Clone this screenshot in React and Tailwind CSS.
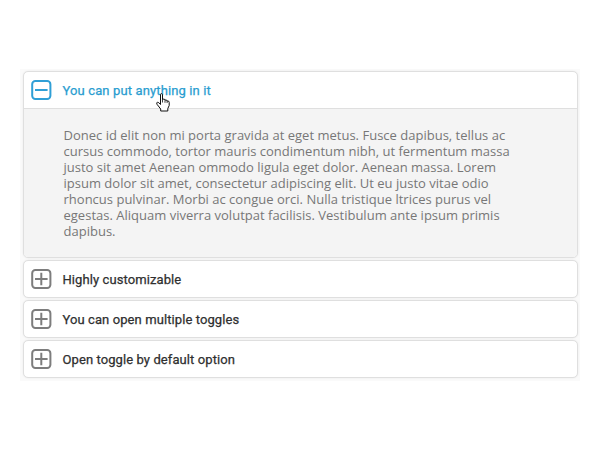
import React from "react";

const items = [
  {
    title: "You can put anything in it",
    open: true,
    lines: [
      "Donec id elit non mi porta gravida at eget metus. Fusce dapibus, tellus ac",
      "cursus commodo, tortor mauris condimentum nibh, ut fermentum massa",
      "justo sit amet Aenean ommodo ligula eget dolor. Aenean massa. Lorem",
      "ipsum dolor sit amet, consectetur adipiscing elit. Ut eu justo vitae odio",
      "rhoncus pulvinar. Morbi ac congue orci. Nulla tristique ltrices purus vel",
      "egestas. Aliquam viverra volutpat facilisis. Vestibulum ante ipsum primis",
      "dapibus.",
    ],
  },
  { title: "Highly customizable" },
  { title: "You can open multiple toggles" },
  { title: "Open toggle by default option" },
];

function ToggleIcon({ open }) {
  return (
    <svg
      width="21"
      height="20"
      viewBox="0 0 21 20"
      fill="none"
      stroke="currentColor"
      strokeWidth="2"
      className={open ? "shrink-0 text-[#2f9fd6]" : "shrink-0 text-[#7d7d7d]"}
    >
      <rect x="1.2" y="1" width="18.2" height="18" rx="3.2" />
      <path d={open ? "M4 10H16.6" : "M4 10H16.6M10.3 3.7V16.3"} />
    </svg>
  );
}

function HandCursor() {
  return (
    <svg width="14" height="19" viewBox="0 0 14 19" className="absolute left-[156px] top-[92.5px]">
      <path
        d="M4.5 11.5V1.8Q4.5 .6 5.5 .6T6.5 1.8V6.2Q8.9 5.6 9 7Q11 6.5 11.1 8Q13.2 7.6 13.2 9.4V12.5L11.8 15.5V18H4.7V16L1 11.3Q.2 9.6 1.4 9.2Q2.5 8.9 4.5 11.5Z"
        fill="#fff"
        stroke="#111"
        strokeWidth="1"
        strokeLinejoin="round"
      />
      <path d="M6.5 6V9.5M9 7V9.8M11.1 8V10" stroke="#111" strokeWidth=".8" />
    </svg>
  );
}

function Item({ title, open, lines }) {
  return (
    <section className="overflow-hidden rounded-[5px] border border-[#dfdfdf] bg-white shadow-[0_0_2px_rgba(0,0,0,0.08)]">
      <button
        className={`flex h-9 w-full items-center gap-[10.5px] pl-[7px] text-left font-[Roboto,sans-serif] text-[13px] font-normal leading-5 [-webkit-text-stroke:0.25px] ${
          open ? "tracking-[0.13px] text-[#2a9dd0]" : "tracking-[0.09px] text-[#2f2f2f]"
        }`}
      >
        <ToggleIcon open={open} />
        <span className="pt-0.5">{title}</span>
      </button>
      {open && (
        <div className="h-[149px] border-t border-[#dfdfdf] bg-[#f4f4f4] pl-[39.5px] pt-[18px] font-['Open_Sans',sans-serif] text-[13px] leading-4 tracking-[0.008px] text-[#777]">
          {lines.map((line) => (
            <p key={line} className="whitespace-nowrap">{line}</p>
          ))}
        </div>
      )}
    </section>
  );
}

export default function App() {
  return (
    <main className="relative h-[450px] w-[600px] overflow-hidden bg-white pl-5 pt-[69px]">
      <div className="flex h-[312px] w-[560px] flex-col gap-0.5 bg-[#fafafa] pl-[3px] pr-0.5 pt-0.5">
        {items.map((item) => (
          <Item key={item.title} {...item} />
        ))}
      </div>
      <HandCursor />
    </main>
  );
}
